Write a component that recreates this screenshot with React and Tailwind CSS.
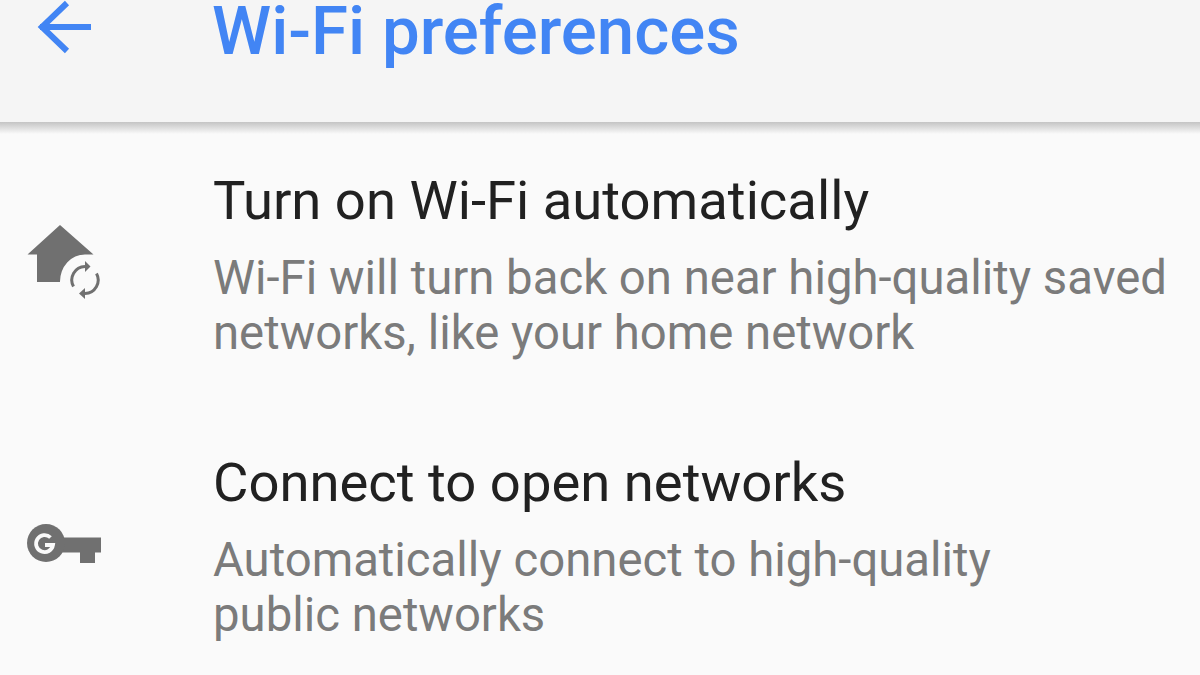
const font = { fontFamily: 'Roboto, sans-serif' };

function BackArrow() {
  return (
    <svg width="60" height="60" viewBox="0 0 60 60" fill="none" className="shrink-0 ml-[35px]">
      <path d="M5 27H56" stroke="#4285f4" strokeWidth="6" />
      <path d="M32 3L7 27L32 51" stroke="#4285f4" strokeWidth="6" />
    </svg>
  );
}

function HomeSyncIcon() {
  return (
    <svg width="80" height="80" viewBox="24 222 80 80" className="shrink-0">
      <path d="M60 225L93.5 254.5H85A25 27 0 0 0 60 282H37V254.5H27.5Z" fill="#707070" />
      <g fill="none" stroke="#707070" strokeWidth="3">
        <path d="M73.5 286.5A13.5 13.5 0 0 1 85 266.5" />
        <path d="M96.5 273.5A13.5 13.5 0 0 1 85 293.5" />
      </g>
      <path d="M85 261L90.5 266.5L85 272Z" fill="#707070" />
      <path d="M85 288L79 293.5L85 299Z" fill="#707070" />
    </svg>
  );
}

function KeyIcon() {
  return (
    <svg width="80" height="44" viewBox="24 522 80 44" className="shrink-0">
      <path d="M58 537.5H101V552.5H95V563H80V552.5H58Z" fill="#707070" />
      <circle cx="46" cy="543" r="19" fill="#707070" />
      <path d="M50.5 537.5A8.5 8.5 0 1 0 53 545H45" fill="none" stroke="#fafafa" strokeWidth="3.8" />
    </svg>
  );
}

function SettingRow({ icon, title, lines, className, iconClass }) {
  return (
    <div className={'flex ' + className}>
      <div className={'w-[213px] shrink-0 pl-[24px] ' + iconClass}>{icon}</div>
      <div>
        <div className="text-[54.4px] leading-[56px] text-[#212121]">{title}</div>
        <div className="mt-[22px] text-[47.3px] leading-[55px] text-[#7b7b7b]">
          {lines.map((line) => (
            <div key={line} className="whitespace-nowrap">{line}</div>
          ))}
        </div>
      </div>
    </div>
  );
}

export default function App() {
  return (
    <div className="w-[1200px] h-[675px] overflow-hidden bg-[#fafafa]" style={font}>
      <header className="h-[122px] bg-[#f5f5f5] flex items-start">
        <BackArrow />
        <h1 className="ml-[117px] text-[67.2px] leading-[62px] font-medium text-[#4285f4] whitespace-nowrap">Wi-Fi preferences</h1>
      </header>
      <div className="h-[12px] bg-gradient-to-b from-[#c4c4c4] to-[#fafafa]" />
      <SettingRow
        className="mt-[39px]"
        iconClass="pt-[49px]"
        icon={<HomeSyncIcon />}
        title="Turn on Wi-Fi automatically"
        lines={['Wi-Fi will turn back on near high-quality saved', 'networks, like your home network']}
      />
      <SettingRow
        className="mt-[94px]"
        iconClass="pt-[67px]"
        icon={<KeyIcon />}
        title="Connect to open networks"
        lines={['Automatically connect to high-quality', 'public networks']}
      />
    </div>
  );
}
